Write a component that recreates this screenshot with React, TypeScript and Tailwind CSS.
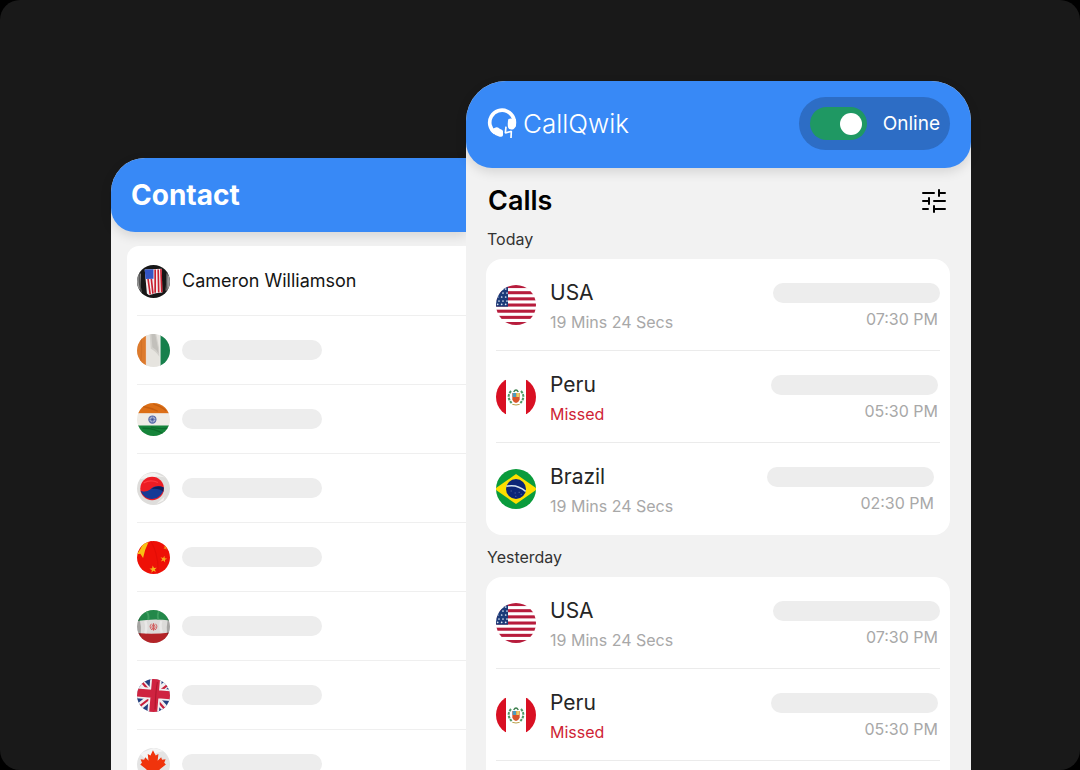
import type { ReactNode } from 'react';

type FlagName =
  | 'usa'
  | 'usaPhoto'
  | 'peru'
  | 'brazil'
  | 'ivory'
  | 'india'
  | 'korea'
  | 'china'
  | 'iran'
  | 'uk'
  | 'canada';

interface Call {
  country: string;
  flag: FlagName;
  detail: string;
  missed?: boolean;
  time: string;
  inset: string;
  timeInset?: string;
}

const calls: Call[] = [
  { country: 'USA', flag: 'usa', detail: '19 Mins 24 Secs', time: '07:30 PM', inset: 'pr-0', timeInset: 'pr-0.5' },
  { country: 'Peru', flag: 'peru', detail: 'Missed', missed: true, time: '05:30 PM', inset: 'pr-0.5' },
  { country: 'Brazil', flag: 'brazil', detail: '19 Mins 24 Secs', time: '02:30 PM', inset: 'pr-1.5' },
];

const contacts: { flag: FlagName; name?: string }[] = [
  { flag: 'usaPhoto', name: 'Cameron Williamson' },
  { flag: 'ivory' },
  { flag: 'india' },
  { flag: 'korea' },
  { flag: 'china' },
  { flag: 'iran' },
  { flag: 'uk' },
  { flag: 'canada' },
];

const STAR = '0,-10 2.4,-3.1 9.5,-3.1 3.8,1.2 5.9,8.1 0,4 -5.9,8.1 -3.8,1.2 -9.5,-3.1 -2.4,-3.1';

// Every flag is drawn on a 120x120 board and cut round by its wrapper.
const flagArt: Record<FlagName, ReactNode> = {
  usa: (
    <>
      <rect width="120" height="120" fill="#fff" />
      {[0, 1, 2, 3, 4, 5, 6].map((i) => (
        <rect key={i} y={i * 18.5} width="120" height="9.2" fill="#b71c3c" />
      ))}
      <rect width="36" height="65" fill="#1b3a78" />
      {[12, 24, 36, 48, 58].map((y, i) =>
        [5, 17, 29].map((x) => <circle key={`${x}-${y}`} cx={x + (i % 2 ? 4 : 0)} cy={y} r="2.6" fill="#dbe3f3" />)
      )}
    </>
  ),
  usaPhoto: (
    <>
      <rect width="120" height="120" fill="#161616" />
      <path d="M0 40 L14 30 L12 90 L0 84Z M108 30 L120 44 V86 L104 94Z" fill="#9b9b9b" />
      <path d="M10 20 Q4 60 16 98 M112 18 Q104 60 110 100" stroke="#555" strokeWidth="5" fill="none" />
      <path d="M28 16 L90 14 L92 100 Q68 100 44 110 L36 104Z" fill="#f3eef0" />
      <path
        d="M40 50 L48 107 M52 50 L58 104 M66 16 V101 M77 16 L79 100 M87 15 L90 99"
        stroke="#c8202f"
        strokeWidth="6"
        fill="none"
      />
      <path d="M28 16 L60 15 V50 L31 51Z" fill="#3355c4" />
    </>
  ),
  peru: (
    <>
      <rect width="120" height="120" fill="#fff" />
      <path d="M0 8 H30 V112 H0Z M90 8 H120 V112 H90Z" fill="#d91023" />
      <path d="M45 42 Q30 60 47 78 M75 42 Q90 60 73 78" stroke="#4f9a66" strokeWidth="6" strokeDasharray="8 3" fill="none" />
      <path d="M49 48 H71 V68 Q68 76 60 78 Q52 76 49 68Z" fill="#d9542b" />
      <rect x="50" y="48" width="10" height="12" fill="#4c9cc0" />
      <rect x="61" y="48" width="9" height="12" fill="#e8cf66" />
      <path d="M53 45 Q60 33 67 45" stroke="#3d7f4d" strokeWidth="4" fill="none" />
      <path d="M49 82 Q60 86 71 82" stroke="#b9a04a" strokeWidth="3" fill="none" />
    </>
  ),
  brazil: (
    <>
      <rect width="120" height="120" fill="#0a9b3c" />
      <path d="M-4 60 L60 15 L124 60 L60 105Z" fill="#fedf00" />
      <circle cx="60" cy="60" r="30" fill="#0c2577" />
      <path d="M31 52 Q62 44 89 67" stroke="#d5e3ef" strokeWidth="4.5" fill="none" />
      <path d="M44 66 h3 M56 72 h3 M68 70 h3 M58 82 h3 M74 76 h3" stroke="#8fa2d0" strokeWidth="2" />
    </>
  ),
  ivory: (
    <>
      <rect width="120" height="120" fill="#e6e4df" />
      <rect width="34" height="120" fill="#dd7a2c" />
      <rect x="84" width="36" height="120" fill="#16804c" />
      <path d="M46 0 L70 0 L80 50 L82 84 Q66 60 50 54Z" fill="#d2d0cb" />
      <path d="M52 0 L66 0 L76 50 L78 70 Q68 54 56 48Z" fill="#c2c0bb" />
      <path d="M34 0 V120 M84 0 V120" stroke="#f2f1ee" strokeWidth="3" />
      <path d="M14 8 Q20 60 12 112" stroke="#d27126" strokeWidth="5" fill="none" />
    </>
  ),
  india: (
    <>
      <rect width="120" height="120" fill="#efece6" />
      <rect width="120" height="37" fill="#dc6f17" />
      <path d="M0 82 H120 V120 H0Z" fill="#16843a" />
      <path d="M18 12 Q50 18 76 30 M60 4 Q88 12 106 28" stroke="#c75f10" strokeWidth="5" fill="none" />
      <path d="M20 92 Q60 90 96 112 M50 88 Q80 96 112 92" stroke="#0c6e2c" strokeWidth="5" fill="none" />
      <circle cx="56" cy="60" r="13" fill="#a9b4d2" stroke="#5468a8" strokeWidth="4" />
      <path d="M56 48 V72 M44 60 H68 M48 52 L64 68 M64 52 L48 68" stroke="#5468a8" strokeWidth="2" />
      <circle cx="56" cy="60" r="4" fill="#3e5299" />
    </>
  ),
  korea: (
    <>
      <rect width="120" height="120" fill="#dedddb" />
      <path d="M8 26 Q30 0 64 4 L104 20 Q70 12 40 22Z M100 90 L70 116 L96 104Z" fill="#f3f2f0" />
      <circle cx="55" cy="60" r="43" fill="#ed1c24" />
      <path d="M13 68 Q32 76 48 64 Q64 44 97 56 A43 43 0 0 1 13 68Z" fill="#163a96" />
      <path d="M52 62 Q72 46 97 56 L96 72 Q80 58 52 62Z" fill="#0d1f5c" />
      <path d="M24 40 Q48 26 76 38" stroke="#ff3a3f" strokeWidth="4" fill="none" />
    </>
  ),
  china: (
    <>
      <rect width="120" height="120" fill="#ee1007" />
      <path d="M22 10 L42 4 L30 32 L22 62 L12 46 L0 48 L12 30Z" fill="#f8c013" />
      <polygon points={STAR} transform="translate(97 66) scale(1.3) rotate(12)" fill="#f5a81c" />
      <polygon points={STAR} transform="translate(59 103) scale(1.4) rotate(-8)" fill="#f5b81c" />
      <polygon points={STAR} transform="translate(104 24) scale(0.9) rotate(20)" fill="#f5901c" />
      <path d="M50 0 Q80 50 76 120" stroke="#e20d06" strokeWidth="4" fill="none" />
    </>
  ),
  iran: (
    <>
      <rect width="120" height="120" fill="#dcdbd9" />
      <path d="M0 0 H120 V38 Q60 30 0 40Z" fill="#23884a" />
      <path d="M0 84 Q60 90 120 82 V120 H0Z" fill="#b32428" />
      <path d="M0 0 Q24 60 8 120 H0Z M120 0 Q100 60 114 120 H120Z" fill="#000" opacity="0.25" />
      <path d="M34 4 Q46 20 40 36 M80 4 Q72 20 78 34" stroke="#3f9f61" strokeWidth="7" fill="none" />
      <path d="M30 40 Q38 62 30 84 M88 40 Q82 60 90 82" stroke="#e9e8e7" strokeWidth="9" fill="none" />
      <path
        d="M53 50 Q42 60 54 73 M67 50 Q78 60 66 73 M60 48 V75 M57 53 Q51 62 58 72 M63 53 Q69 62 62 72"
        stroke="#d04648"
        strokeWidth="3"
        fill="none"
      />
    </>
  ),
  uk: (
    <g transform="rotate(5 60 60)">
      <rect x="-10" y="-10" width="140" height="140" fill="#24407f" />
      <path d="M-6 2 L122 118 M122 -2 L-6 122" stroke="#f0eef0" strokeWidth="25" />
      <path d="M2 4 L58 58 M116 10 L64 58 M6 110 L56 64 M62 64 L112 112" stroke="#c8203c" strokeWidth="8" />
      <path d="M64 -10 V130 M-10 54 H130" stroke="#f0eef0" strokeWidth="42" />
      <path d="M64 -10 V130 M-10 54 H130" stroke="#cf2340" strokeWidth="29" />
      <path d="M70 10 Q66 40 70 110" stroke="#b0182f" strokeWidth="4" fill="none" />
    </g>
  ),
  canada: (
    <>
      <rect width="120" height="120" fill="#e4e4e4" />
      <path d="M10 20 L60 0 L100 10 L70 18 L30 40Z" fill="#f4f4f4" />
      <path
        d="M58 8 L68 27 L78 22 L75 46 L88 34 L91 43 L104 41 L99 54 L105 60 L82 78 L84 88 L61 85 V108 H56 V85 L32 88 L35 78 L12 60 L18 54 L13 41 L26 43 L30 34 L42 46 L39 22 L49 27Z"
        fill="#f0340c"
      />
    </>
  ),
};

function Flag({ name, size }: { name: FlagName; size: string }) {
  return (
    <span className={`block shrink-0 overflow-hidden rounded-full ${size}`}>
      <svg viewBox="0 0 120 120" className="block h-full w-full" aria-hidden="true">
        {flagArt[name]}
      </svg>
    </span>
  );
}

function Logo() {
  return (
    <svg viewBox="0 0 90 93" className="h-[31px] w-[30px]" aria-hidden="true">
      <path d="M24 74 A37 37 0 1 1 80 56" fill="none" stroke="#fff" strokeWidth="11" />
      <path d="M14 68 Q20 59 28 58 Q33 58 38 62 L46 66 Q49 69 48 74 V82 Q46 88 38 86 Q24 83 14 72Z" fill="#fff" />
      <path d="M64 34 Q69 30 76 32 L87 34 V52 Q84 61 79 64 Q66 67 63 58 Q61 44 64 34Z" fill="#fff" />
      <path d="M57 56 L55 75 L73 70 L72 90" fill="none" stroke="#fff" strokeWidth="5" strokeLinejoin="bevel" />
    </svg>
  );
}

function FilterIcon() {
  return (
    <svg
      viewBox="0 0 24 26"
      className="h-[26px] w-6"
      fill="none"
      stroke="#000"
      strokeWidth="2"
      strokeLinecap="round"
      aria-hidden="true"
    >
      <path d="M1 5H12 M17 2V8 M17 5H23" />
      <path d="M1 13H7 M7 10V16 M12 13H23" />
      <path d="M1 21H6 M12 18V24 M12 21H23" />
    </svg>
  );
}

function ContactPanel() {
  return (
    <section className="mt-[77px] min-w-0 flex-[355] rounded-tl-[34px] bg-[#f2f2f2]">
      <header className="flex h-[74px] items-center rounded-tl-[34px] rounded-bl-3xl bg-[#3889f6] pl-5 shadow-[0_4px_12px_rgba(0,0,0,0.12)]">
        <h2 className="text-[28px] leading-9 font-bold text-white">Contact</h2>
      </header>
      <ul className="mt-3.5 ml-4 rounded-tl-xl bg-white pt-px pl-2.5">
        {contacts.map((contact) => (
          <li key={contact.flag} className="flex h-[69px] items-center gap-3 border-b border-[#efefef]">
            <Flag name={contact.flag} size="h-[33px] w-[33px]" />
            {contact.name ? (
              <span className="text-lg whitespace-nowrap text-[#141414]">{contact.name}</span>
            ) : (
              <span className="h-5 w-[140px] rounded-full bg-[#ededed]" />
            )}
          </li>
        ))}
      </ul>
    </section>
  );
}

function CallRow({ call }: { call: Call }) {
  return (
    <li className="flex h-[92px] border-b border-[#ebebeb] last:border-b-0">
      <div className="mr-3.5 flex items-center">
        <Flag name={call.flag} size="h-10 w-10" />
      </div>
      <div className="flex-1 pt-5">
        <p className="text-[21px] leading-7 text-[#262626]">{call.country}</p>
        <p className={`text-base leading-[30px] ${call.missed ? 'text-[#cf1f35]' : 'text-[#a8a8a8]'}`}>
          {call.detail}
        </p>
      </div>
      <div className={`pt-6 ${call.inset}`}>
        <div className="h-5 w-[167px] rounded-full bg-[#ededed]" />
        <p className={`mt-1.5 text-right text-base leading-5 text-[#a8a8a8] ${call.timeInset ?? ''}`}>{call.time}</p>
      </div>
    </li>
  );
}

function CallGroup({ title, items }: { title: string; items: Call[] }) {
  return (
    <section>
      <h3 className="pt-2.5 pb-2 pl-px text-base text-[#333333]">{title}</h3>
      <ul className="rounded-2xl bg-white px-2.5">
        {items.map((call) => (
          <CallRow key={call.country} call={call} />
        ))}
      </ul>
    </section>
  );
}

function CallsPanel() {
  return (
    <section className="z-10 min-w-0 flex-[505] rounded-t-[40px] bg-[#f2f2f2]">
      <header className="flex h-[87px] items-center justify-between rounded-t-[40px] rounded-b-[26px] bg-[#3889f6] pr-[21px] pb-0.5 pl-[21px] shadow-[0_4px_12px_rgba(0,0,0,0.12)]">
        <div className="flex items-center gap-1.5">
          <Logo />
          <h1 className="text-[26px] leading-9 font-light text-white">CallQwik</h1>
        </div>
        <label className="flex h-[53px] items-center gap-4 rounded-full bg-[#2d6dc5] pr-2.5 pl-[11px]">
          <input
            type="checkbox"
            role="switch"
            defaultChecked
            className="flex h-[33px] w-[57px] shrink-0 appearance-none items-center rounded-full bg-gray-400 px-[5px] before:h-[22px] before:w-[22px] before:rounded-full before:bg-white checked:justify-end checked:bg-[#1f9863]"
          />
          <span className="text-[19px] leading-7 text-white">Online</span>
        </label>
      </header>
      <div className="pr-[21px] pl-5">
        <div className="flex h-[49px] items-center justify-between pt-4 pr-1 pl-0.5">
          <h2 className="text-[27px] leading-8 font-semibold text-black">Calls</h2>
          <button type="button" aria-label="Filter calls">
            <FilterIcon />
          </button>
        </div>
        <CallGroup title="Today" items={calls} />
        <CallGroup title="Yesterday" items={calls} />
      </div>
    </section>
  );
}

export default function App() {
  return (
    <div className="h-screen bg-black font-['Inter',sans-serif]">
      <main className="flex h-full items-start overflow-hidden rounded-[20px] bg-[#191919] pt-[81px] pr-[109px] pl-[111px]">
        <ContactPanel />
        <CallsPanel />
      </main>
    </div>
  );
}
